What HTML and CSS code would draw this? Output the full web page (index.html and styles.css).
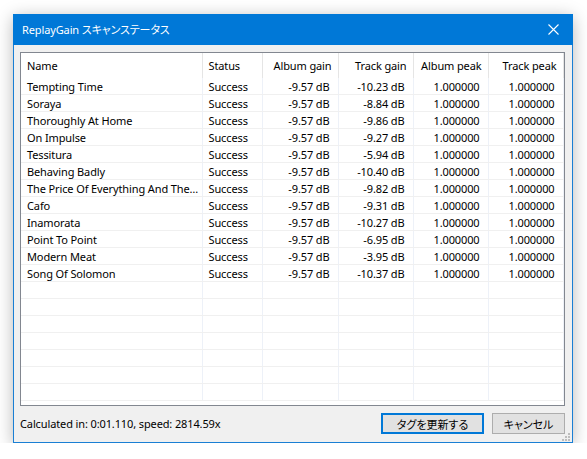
FILE: index.html
```html
<!DOCTYPE html>
<html>
<head>
    <meta charset="UTF-8">
    <title>ReplayGain スキャンステータス</title>
    <link rel="stylesheet" href="styles.css">
</head>
<body>
<div class="window">
    <div class="title_bar">
        <span class="title">ReplayGain スキャンステータス</span>
        <svg class="close" width="11" height="11" viewBox="0 0 11 11">
            <path d="M0.5 0.5 L10.5 10.5 M10.5 0.5 L0.5 10.5" stroke="#fff" stroke-width="1.1" fill="none"/>
        </svg>
    </div>
    <div class="client">
        <div class="list_view">
            <table class="grid">
                <colgroup>
                    <col class="c_name">
                    <col class="c_status">
                    <col class="c_gain">
                    <col class="c_gain2">
                    <col class="c_peak">
                    <col class="c_peak">
                </colgroup>
                <thead>
                    <tr>
                        <th>Name</th>
                        <th>Status</th>
                        <th class="num">Album gain</th>
                        <th class="num">Track gain</th>
                        <th class="num">Album peak</th>
                        <th class="num">Track peak</th>
                    </tr>
                </thead>
                <tbody>
                    <tr><td>Tempting Time</td><td>Success</td><td class="num">-9.57 dB</td><td class="num">-10.23 dB</td><td class="num">1.000000</td><td class="num">1.000000</td></tr>
                    <tr><td>Soraya</td><td>Success</td><td class="num">-9.57 dB</td><td class="num">-8.84 dB</td><td class="num">1.000000</td><td class="num">1.000000</td></tr>
                    <tr><td>Thoroughly At Home</td><td>Success</td><td class="num">-9.57 dB</td><td class="num">-9.86 dB</td><td class="num">1.000000</td><td class="num">1.000000</td></tr>
                    <tr><td>On Impulse</td><td>Success</td><td class="num">-9.57 dB</td><td class="num">-9.27 dB</td><td class="num">1.000000</td><td class="num">1.000000</td></tr>
                    <tr><td>Tessitura</td><td>Success</td><td class="num">-9.57 dB</td><td class="num">-5.94 dB</td><td class="num">1.000000</td><td class="num">1.000000</td></tr>
                    <tr><td>Behaving Badly</td><td>Success</td><td class="num">-9.57 dB</td><td class="num">-10.40 dB</td><td class="num">1.000000</td><td class="num">1.000000</td></tr>
                    <tr><td>The Price Of Everything And The…</td><td>Success</td><td class="num">-9.57 dB</td><td class="num">-9.82 dB</td><td class="num">1.000000</td><td class="num">1.000000</td></tr>
                    <tr><td>Cafo</td><td>Success</td><td class="num">-9.57 dB</td><td class="num">-9.31 dB</td><td class="num">1.000000</td><td class="num">1.000000</td></tr>
                    <tr><td>Inamorata</td><td>Success</td><td class="num">-9.57 dB</td><td class="num">-10.27 dB</td><td class="num">1.000000</td><td class="num">1.000000</td></tr>
                    <tr><td>Point To Point</td><td>Success</td><td class="num">-9.57 dB</td><td class="num">-6.95 dB</td><td class="num">1.000000</td><td class="num">1.000000</td></tr>
                    <tr><td>Modern Meat</td><td>Success</td><td class="num">-9.57 dB</td><td class="num">-3.95 dB</td><td class="num">1.000000</td><td class="num">1.000000</td></tr>
                    <tr><td>Song Of Solomon</td><td>Success</td><td class="num">-9.57 dB</td><td class="num">-10.37 dB</td><td class="num">1.000000</td><td class="num">1.000000</td></tr>
                    <tr><td></td><td></td><td></td><td></td><td></td><td></td></tr>
                    <tr><td></td><td></td><td></td><td></td><td></td><td></td></tr>
                    <tr><td></td><td></td><td></td><td></td><td></td><td></td></tr>
                    <tr><td></td><td></td><td></td><td></td><td></td><td></td></tr>
                    <tr><td></td><td></td><td></td><td></td><td></td><td></td></tr>
                    <tr><td></td><td></td><td></td><td></td><td></td><td></td></tr>
                    <tr><td></td><td></td><td></td><td></td><td></td><td></td></tr>
                </tbody>
            </table>
        </div>
        <div class="footer">
            <span class="stats">Calculated in: 0:01.110, speed: 2814.59x</span>
            <button class="btn btn_default">タグを更新する</button>
            <button class="btn btn_cancel">キャンセル</button>
        </div>
    </div>
    <!-- size grip -->
    <svg class="grip" width="9" height="9" viewBox="0 0 9 9">
        <rect x="7" y="1" width="2" height="2" fill="#bdbdbd"/>
        <rect x="4" y="4" width="2" height="2" fill="#bdbdbd"/>
        <rect x="7" y="4" width="2" height="2" fill="#bdbdbd"/>
        <rect x="1" y="7" width="2" height="2" fill="#bdbdbd"/>
        <rect x="4" y="7" width="2" height="2" fill="#bdbdbd"/>
        <rect x="7" y="7" width="2" height="2" fill="#bdbdbd"/>
    </svg>
</div>
</body>
</html>
```

FILE: styles.css
```css
body {
    margin: 0;
    background-color: #ffffff;
    font-family: "Noto Sans", "Noto Sans CJK JP", sans-serif;
    font-size: 11px;
    letter-spacing: -0.12px;
    color: #000000;
}

.window {
    position: relative;
    margin: 14px 0 0 13px;
    width: 558px;
    height: 428px;
    border: 1px solid #1a7fd4;
    border-top: 0;
    background-color: #f0f0f0;
    box-shadow: 0 3px 16px rgba(0, 0, 0, 0.28);
    display: flex;
    flex-direction: column;
}

.title_bar {
    height: 31px;
    margin: 0 -1px;
    padding: 0 10px 0 9px;
    background-color: #0078d7;
    display: flex;
    align-items: center;
    justify-content: space-between;
}

.title {
    color: #ffffff;
    font-size: 11px;
    font-feature-settings: "palt";
    padding-bottom: 1px;
}

.close {
    display: block;
    margin-right: 4px;
}

.client {
    flex: 1;
    display: flex;
    flex-direction: column;
    padding: 7px 7px 0 6px;
}

.list_view {
    height: 352px;
    border: 1px solid #828790;
    background-color: #ffffff;
    overflow: hidden;
}

.grid {
    table-layout: fixed;
    border-collapse: collapse;
    width: 542px;
}

.c_name {
    width: 181px;
}

.c_status {
    width: 60px;
}

.c_gain {
    width: 76px;
}

.c_gain2,
.c_peak {
    width: 75px;
}

.grid th {
    height: 25px;
    padding: 0 6px 0 6px;
    font-weight: normal;
    text-align: left;
    border-right: 1px solid #e5e5e5;
    white-space: nowrap;
}

.grid td {
    height: 14px;
    line-height: 14px;
    padding: 2px 8px 0 6px;
    border-right: 1px solid #edf1f8;
    border-bottom: 1px solid #f0f0f0;
    white-space: nowrap;
    overflow: hidden;
    text-overflow: ellipsis;
}

.grid td:first-child {
    padding-right: 3px;
}

.grid .num {
    text-align: right;
}

.footer {
    flex: 1;
    display: flex;
    align-items: center;
    padding-bottom: 1px;
}

.stats {
    flex: 1;
}

.btn {
    height: 21px;
    padding: 0;
    font-family: "Noto Sans CJK JP", sans-serif;
    font-size: 11px;
    font-feature-settings: "palt";
    color: #000000;
    background-color: #e1e1e1;
    border: 1px solid #adadad;
}

.btn_default {
    width: 103px;
    border: 2px solid #0078d7;
}

.btn_cancel {
    width: 73px;
    margin-left: 8px;
}

.grip {
    position: absolute;
    right: 2px;
    bottom: 1px;
}
```
